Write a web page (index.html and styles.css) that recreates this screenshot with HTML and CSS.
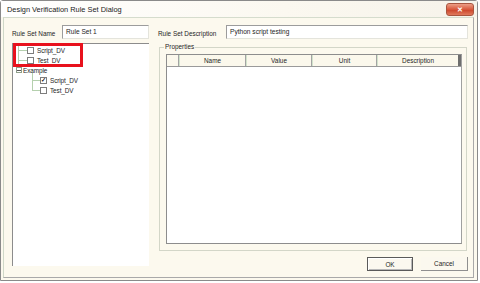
FILE: index.html
```html
<!DOCTYPE html>
<html lang="en">
<head>
    <meta charset="UTF-8">
    <title>Design Verification Rule Set Dialog</title>
    <link rel="stylesheet" href="styles.css">
</head>
<body>
    <div class="window">
        <div class="titlebar">
            <span class="title">Design Verification Rule Set Dialog</span>
            <button class="close">&#10005;</button>
        </div>
        <div class="client">
            <div class="left">
                <div class="field">
                    <span class="label">Rule Set Name</span>
                    <div class="input name-input">Rule Set 1</div>
                </div>
                <div class="tree">
                    <div class="highlight"></div>
                    <div class="node top">
                        <span class="branch"></span><span class="check"></span><span class="text">Script_DV</span>
                    </div>
                    <div class="node top">
                        <span class="branch"></span><span class="check"></span><span class="text">Test_DV</span>
                    </div>
                    <div class="node parent">
                        <span class="expander"></span><span class="text">Example</span>
                    </div>
                    <div class="node child">
                        <span class="branch"></span><span class="check checked">&#10003;</span><span class="text">Script_DV</span>
                    </div>
                    <div class="node child last">
                        <span class="branch"></span><span class="check"></span><span class="text">Test_DV</span>
                    </div>
                </div>
            </div>
            <div class="right">
                <div class="field">
                    <span class="label">Rule Set Description</span>
                    <div class="input desc-input">Python script testing</div>
                </div>
                <fieldset class="group">
                    <legend>Properties</legend>
                    <div class="grid">
                        <div class="grid-head">
                            <div class="cell corner"></div>
                            <div class="cell">Name</div>
                            <div class="cell">Value</div>
                            <div class="cell">Unit</div>
                            <div class="cell last">Description</div>
                        </div>
                    </div>
                </fieldset>
                <div class="buttons">
                    <button class="btn ok">OK</button>
                    <button class="btn cancel">Cancel</button>
                </div>
            </div>
        </div>
    </div>
</body>
</html>
```

FILE: styles.css
```css
* {
    box-sizing: border-box;
}

body {
    margin: 0;
    background-color: #ffffff;
    font-family: "Liberation Sans", Arial, sans-serif;
    color: #1e1e1e;
}

.window {
    width: 478px;
    height: 281px;
    border: 1px solid #8a8a8a;
    border-radius: 3px 3px 0 0;
    background-color: #fcf9ee;
    display: flex;
    flex-direction: column;
}

.titlebar {
    height: 16px;
    display: flex;
    align-items: center;
    justify-content: space-between;
    padding: 0 3px 0 6px;
    background: linear-gradient(to right, #ffffff, #fbf8f0 60%, #f6f3ea);
}

.title {
    font-size: 7.4px;
    color: #1a1a1a;
    padding-top: 1px;
}

.close {
    width: 28px;
    height: 13px;
    margin-top: 1px;
    border: 1px solid #a8553f;
    border-radius: 3px;
    background: linear-gradient(#ec9f86, #d8583c 50%, #cc472d 55%, #e07a5d);
    color: #ffffff;
    font-size: 7px;
    font-weight: bold;
    line-height: 10px;
    padding: 0;
}

.client {
    flex: 1;
    margin: 0 3px 2px 2px;
    border-left: 1px solid #cfd8c8;
    border-top: 1px solid #d5dccd;
    border-right: 1px solid #a9a9a9;
    border-bottom: 1px solid #a9a9a9;
    padding: 7px 5px 0 8px;
    display: flex;
    gap: 9px;
}

.left {
    width: 137px;
    display: flex;
    flex-direction: column;
}

.right {
    width: 310px;
    display: flex;
    flex-direction: column;
}

.field {
    height: 14px;
    display: flex;
    align-items: center;
}

.label {
    font-size: 6.4px;
    width: 50px;
    padding-top: 3px;
}

.right .label {
    width: 68px;
}

.input {
    flex: 1;
    height: 14px;
    background-color: #ffffff;
    border: 1px solid #9c9c9c;
    border-right-color: #e4e4dc;
    border-bottom-color: #e4e4dc;
    font-size: 6.6px;
    padding: 2px 3px;
}

.tree {
    position: relative;
    margin-top: 4px;
    height: 223px;
    background-color: #ffffff;
    border-left: 1px solid #8c8c8c;
    border-top: 1px solid #8c8c8c;
    padding-top: 1px;
}

.highlight {
    position: absolute;
    left: 0;
    top: -1px;
    width: 70px;
    height: 24px;
    border: 3px solid #e8111c;
}

.node {
    height: 10px;
    display: flex;
    align-items: center;
    font-size: 6.4px;
}

.node.top {
    padding-left: 5px;
}

.node.child {
    padding-left: 19px;
}

.branch {
    width: 9px;
    height: 10px;
    background:
        linear-gradient(#b5d0ae, #b5d0ae) 0 0 / 1px 100% no-repeat,
        linear-gradient(#b5d0ae, #b5d0ae) 0 5px / 100% 1px no-repeat;
}

.child .branch {
    width: 8px;
}

.child.last .branch {
    background:
        linear-gradient(#b5d0ae, #b5d0ae) 0 0 / 1px 6px no-repeat,
        linear-gradient(#b5d0ae, #b5d0ae) 0 5px / 100% 1px no-repeat;
}

.check {
    width: 7px;
    height: 7px;
    border: 1px solid #7d7d7d;
    background-color: #ffffff;
    font-size: 6px;
    line-height: 5px;
    text-align: center;
    font-weight: bold;
    color: #1a1a1a;
}

.text {
    margin-left: 3px;
    letter-spacing: -0.1px;
}

.node.parent {
    padding-left: 3px;
    background:
        linear-gradient(#b5d0ae, #b5d0ae) 5px 0 / 1px 2px no-repeat,
        linear-gradient(#b5d0ae, #b5d0ae) 19px 8px / 1px 2px no-repeat;
}

.expander {
    width: 6px;
    height: 6px;
    border: 1px solid #8e9f8a;
    background: linear-gradient(#5a5a5a, #5a5a5a) center / 4px 1px no-repeat, #ffffff;
}

.parent .text {
    margin-left: 1px;
}

.group {
    margin: 4px 1px 0 1px;
    height: 208px;
    border: 1px solid #d3d6c8;
    padding: 3px 4px 6px 6px;
}

.group legend {
    font-size: 6.4px;
    line-height: 8px;
    padding: 0 1px;
    margin-left: -2px;
}

.grid {
    height: 190px;
    background-color: #ffffff;
    border: 1px solid #8d8d8d;
    border-right-color: #a0a0a0;
}

.grid-head {
    height: 12px;
    display: grid;
    grid-template-columns: 12px 67px 66px 65px 1fr;
    background-color: #fbf8ec;
    border-bottom: 1px solid #9a9a9a;
}

.cell {
    font-size: 6.4px;
    text-align: center;
    line-height: 11px;
    border-left: 1px solid #d2e3cc;
    border-right: 1px solid #a3a3a3;
}

.cell.corner {
    border-left: none;
}

.cell.last {
    border-right: 3px solid #6e6e6e;
}

.buttons {
    margin-top: 6px;
    display: flex;
    justify-content: flex-end;
    gap: 8px;
}

.btn {
    height: 14px;
    font-family: "Liberation Sans", Arial, sans-serif;
    font-size: 6.4px;
    color: #1e1e1e;
    background-color: #fbf8ef;
    padding: 0;
}

.ok {
    width: 46px;
    border: 1px solid #5a5a5a;
    box-shadow: inset 1px 1px 0 #ffffff, inset -1px -1px 0 #b8b8b8;
}

.cancel {
    width: 47px;
    border: none;
    border-right: 1px solid #8f8f8f;
    border-bottom: 1px solid #8f8f8f;
}
```
